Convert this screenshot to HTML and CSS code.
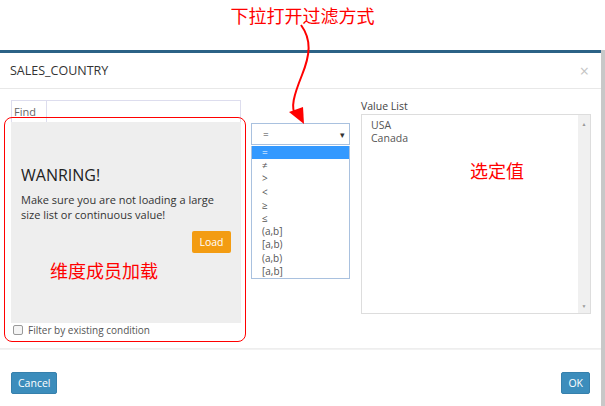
FILE: index.html
```html
<!DOCTYPE html>
<html lang="zh-CN">
<head>
  <meta charset="UTF-8">
  <title>SALES_COUNTRY</title>
  <link rel="stylesheet" href="styles.css">
</head>
<body>
  <div class="note-top">下拉打开过滤方式</div>

  <div class="page">
    <div class="modal">
      <div class="modal-header">
        <span class="modal-title">SALES_COUNTRY</span>
        <span class="close">×</span>
      </div>

      <div class="modal-body">
        <div class="col-left">
          <div class="find-group">
            <span class="find-label">Find</span>
            <span class="find-input"></span>
          </div>
          <div class="warn-panel">
            <h3>WANRING!</h3>
            <p>Make sure you are not loading a large size list or continuous value!</p>
            <div class="load-row"><button class="btn-load">Load</button></div>
          </div>
          <label class="check-row"><span class="checkbox"></span>Filter by existing condition</label>
        </div>

        <div class="col-mid">
          <div class="select-box">
            <span>=</span>
            <span class="caret">▾</span>
          </div>
          <ul class="option-list">
            <li class="active">=</li>
            <li>≠</li>
            <li>&gt;</li>
            <li>&lt;</li>
            <li>≥</li>
            <li>≤</li>
            <li>(a,b]</li>
            <li>[a,b)</li>
            <li>(a,b)</li>
            <li>[a,b]</li>
          </ul>
        </div>

        <div class="col-right">
          <div class="value-label">Value List</div>
          <div class="value-box">
            <div class="value-items">
              <div>USA</div>
              <div>Canada</div>
            </div>
            <div class="scrollbar">
              <span class="arrow">▲</span>
              <span class="arrow">▼</span>
            </div>
          </div>
        </div>
      </div>

      <div class="modal-footer">
        <button class="btn">Cancel</button>
        <button class="btn">OK</button>
      </div>
    </div>
    <div class="backdrop"></div>
  </div>

  <!-- 標註 -->
  <div class="note-box"></div>
  <div class="note note-load">维度成员加载</div>
  <div class="note note-value">选定值</div>
  <svg class="note-arrow" width="60" height="110" viewBox="270 20 60 110">
    <path d="M301 25 C 312 40, 310 55, 302 75 C 294 95, 290 108, 296 116" fill="none" stroke="#f00" stroke-width="2"/>
    <path d="M289 112 L 304 124 L 303 107 Z" fill="#f00"/>
  </svg>
</body>
</html>
```

FILE: styles.css
```css
body {
  margin: 0;
  width: 605px;
  height: 406px;
  overflow: hidden;
  position: relative;
  background: #fff;
  font-family: "Open Sans", "Liberation Sans", sans-serif;
  color: #333;
}
.note-top {
  height: 50px;
  line-height: 30px;
  text-align: center;
  font-family: "Noto Sans CJK SC", sans-serif;
  font-size: 18px;
  color: #f00;
}
.page {
  display: flex;
  height: 356px;
}
.modal {
  width: 601px;
  border-top: 3px solid #2b6286;
  background: #fff;
  display: flex;
  flex-direction: column;
}
.backdrop {
  flex: 1;
  background: #c8c8c8;
}
.modal-header {
  height: 35px;
  display: flex;
  align-items: center;
  justify-content: space-between;
  padding: 0 12px 0 10px;
  border-bottom: 1px solid #e8e8e8;
}
.modal-title {
  font-size: 12.5px;
  color: #333;
}
.close {
  font-size: 16px;
  color: #c4c4c4;
}
.modal-body {
  display: flex;
  padding: 11px 10px 0 11px;
  height: 248px;
  border-bottom: 1px solid #eee;
}
.col-left {
  width: 230px;
  display: flex;
  flex-direction: column;
}
.find-group {
  display: flex;
  height: 21px;
  border: 1px solid #dde;
  border-bottom: none;
}
.find-label {
  width: 35px;
  border-right: 1px solid #dde;
  font-size: 11px;
  color: #666;
  padding: 3px 0 0 2px;
  box-sizing: border-box;
}
.warn-panel {
  height: 201px;
  background: #eee;
  padding: 42px 10px 0 10px;
  box-sizing: border-box;
}
.warn-panel h3 {
  margin: 0 0 6px 0;
  font-size: 16px;
  font-weight: normal;
  color: #222;
}
.warn-panel p {
  margin: 0;
  font-size: 11px;
  line-height: 15px;
  color: #333;
}
.load-row {
  display: flex;
  justify-content: flex-end;
  margin-top: 9px;
}
.btn-load {
  width: 39px;
  height: 22px;
  border: none;
  border-radius: 2px;
  background: #f39c12;
  color: #fff;
  font-family: inherit;
  font-size: 10.5px;
  padding: 0;
}
.check-row {
  display: flex;
  align-items: center;
  gap: 5px;
  margin-top: 0;
  padding-left: 2px;
  font-size: 10px;
  color: #555;
}
.checkbox {
  width: 8px;
  height: 8px;
  border: 1px solid #999;
  border-radius: 2px;
  background: #f4f4f4;
}
.col-mid {
  width: 99px;
  margin: 23px 0 0 10px;
}
.select-box {
  height: 20px;
  border: 1px solid #a9c1df;
  display: flex;
  align-items: center;
  justify-content: space-between;
  padding: 0 4px 0 11px;
  font-size: 10px;
  color: #444;
}
.caret {
  font-size: 9px;
  color: #333;
}
.option-list {
  list-style: none;
  margin: 1px 0 0 0;
  padding: 0;
  border: 1px solid #a9c1df;
  border-top: none;
}
.option-list li {
  height: 13.2px;
  line-height: 13px;
  padding-left: 10px;
  font-size: 10px;
  color: #555;
}
.option-list li.active {
  background: #3399ff;
  color: #fff;
}
.col-right {
  width: 230px;
  margin-left: 11px;
}
.value-label {
  font-size: 10.5px;
  color: #444;
  height: 14px;
  line-height: 12px;
}
.value-box {
  height: 198px;
  border: 1px solid #ddd;
  display: flex;
}
.value-items {
  flex: 1;
  padding: 4px 0 0 9px;
  font-size: 10.5px;
  line-height: 13px;
  color: #555;
}
.scrollbar {
  width: 12px;
  background: #f0f0f0;
  display: flex;
  flex-direction: column;
  justify-content: space-between;
  align-items: center;
  padding: 6px 0 4px 0;
}
.arrow {
  font-size: 5px;
  color: #999;
}
.modal-footer {
  flex: 1;
  display: flex;
  justify-content: space-between;
  align-items: flex-start;
  padding: 22px 11px 0 11px;
  border-top: 1px solid #f2f2f2;
}
.btn {
  height: 22px;
  padding: 0 6px;
  border: 1px solid #3680ac;
  border-radius: 2px;
  background: #3c8dbc;
  color: #fff;
  font-family: inherit;
  font-size: 10.5px;
}
.note-box {
  position: absolute;
  left: 4px;
  top: 117px;
  width: 240px;
  height: 223px;
  border: 1px solid #f00;
  border-radius: 8px;
}
.note {
  position: absolute;
  font-family: "Noto Sans CJK SC", sans-serif;
  font-size: 18px;
  color: #f00;
  line-height: 20px;
}
.note-load {
  left: 50px;
  top: 260px;
}
.note-value {
  left: 470px;
  top: 160px;
}
.note-arrow {
  position: absolute;
  left: 270px;
  top: 20px;
}
```
